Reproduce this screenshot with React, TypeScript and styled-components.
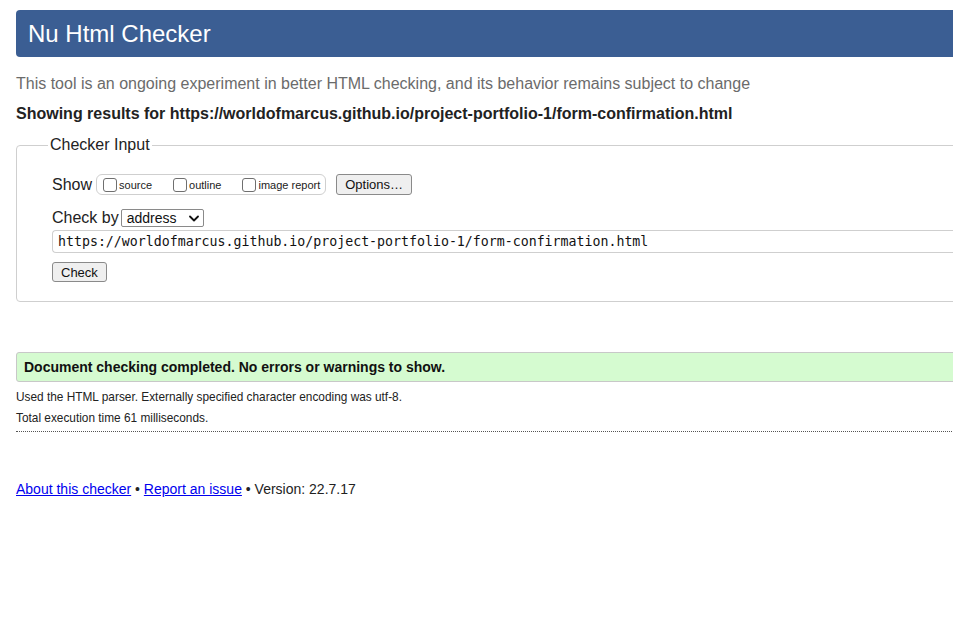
import React from "react";
import styled, { createGlobalStyle } from "styled-components";

const Global = createGlobalStyle`
  html, body { margin: 0; padding: 0; background: #fff; overflow: hidden; }
  body { font-family: "Liberation Sans", Arial, sans-serif; color: #222; }
`;

const Page = styled.div`
  width: 1000px;
  padding: 10px 0 0 16px;
  box-sizing: border-box;
`;

const Header = styled.h1`
  margin: 0;
  height: 47px;
  display: flex;
  align-items: center;
  padding: 0 12px;
  background: #3b5e93;
  color: #fff;
  font-weight: normal;
  font-size: 24px;
  border-radius: 4px;
`;

const Intro = styled.p`
  margin: 18px 0 0;
  font-size: 16px;
  color: #6b6b6b;
  line-height: 18px;
`;

const Showing = styled.p`
  margin: 12px 0 0;
  font-size: 16px;
  font-weight: bold;
  color: #222;
  line-height: 18px;
`;

const Fieldset = styled.fieldset`
  margin: 13px 0 0;
  padding: 10px 0 19px 35px;
  border: 1px solid #cfcfcf;
  border-radius: 4px;
  min-width: 0;
`;

const Legend = styled.legend`
  margin-left: -4px;
  padding: 0 2px;
  font-size: 16px;
  line-height: 18px;
  color: #222;
`;

const Row = styled.div<{ $mt?: number }>`
  display: flex;
  align-items: center;
  font-size: 16px;
  line-height: 18px;
  margin-top: ${(p) => p.$mt ?? 0}px;
`;

const Label = styled.span<{ $mr?: number }>`
  margin-right: ${(p) => p.$mr ?? 4}px;
`;

const Group = styled.div`
  display: flex;
  align-items: center;
  height: 19px;
  padding: 0 5px 0 6px;
  border: 1px solid #cfcfcf;
  border-radius: 6px;
`;

const CheckLabel = styled.label<{ $mr?: number }>`
  display: flex;
  align-items: center;
  font-size: 11px;
  color: #222;
  margin-right: ${(p) => p.$mr ?? 0}px;
`;

const Box = styled.span`
  display: inline-block;
  width: 14px;
  height: 14px;
  border: 1px solid #6f6f6f;
  border-radius: 3px;
  margin-right: 2px;
  box-sizing: border-box;
`;

const Button = styled.button<{ $h?: number; $ml?: number }>`
  font-family: "Liberation Sans", Arial, sans-serif;
  font-size: 13px;
  color: #111;
  background: #efefef;
  border: 1px solid #8a8a8a;
  border-radius: 3px;
  padding: 0 8px;
  height: ${(p) => p.$h ?? 20}px;
  margin-left: ${(p) => p.$ml ?? 0}px;
  line-height: 1;
`;

const Select = styled.div`
  display: flex;
  align-items: center;
  justify-content: space-between;
  width: 83px;
  height: 18px;
  box-sizing: border-box;
  border: 1px solid #8a8a8a;
  border-radius: 2px;
  padding: 0 4px 0 5px;
  font-size: 14px;
  color: #111;
`;

const UrlInput = styled.div`
  margin-top: 3px;
  height: 23px;
  box-sizing: border-box;
  border: 1px solid #cfcfcf;
  border-right: none;
  border-radius: 4px 0 0 4px;
  padding: 0 5px;
  display: flex;
  align-items: center;
  font-family: "DejaVu Sans Mono", Menlo, monospace;
  font-size: 13.25px;
  color: #111;
`;

const Result = styled.div`
  margin-top: 50px;
  height: 30px;
  box-sizing: border-box;
  background: #d5fbd0;
  border: 1px solid #c8c8c8;
  border-radius: 3px;
  display: flex;
  align-items: center;
  padding-left: 7px;
  font-size: 14px;
  font-weight: bold;
  color: #111;
`;

const Small = styled.p<{ $mt?: number }>`
  margin: ${(p) => p.$mt ?? 0}px 0 0;
  font-size: 11.85px;
  line-height: 14px;
  color: #222;
`;

const Rule = styled.hr`
  margin: 6px 0 0;
  border: none;
  border-top: 1px dotted #555;
  height: 0;
`;

const Footer = styled.p`
  margin: 49px 0 0;
  font-size: 14px;
  line-height: 17px;
  color: #222;
  a { color: #0000ee; text-decoration: underline; }
`;

const Chevron = () => (
  <svg width="10" height="7" viewBox="0 0 10 7">
    <path d="M1 1.5 L5 5.5 L9 1.5" fill="none" stroke="#111" strokeWidth="1.8" strokeLinecap="round" strokeLinejoin="round" />
  </svg>
);

export default function App() {
  return (
    <Page>
      <Global />
      <Header>Nu Html Checker</Header>
      <Intro>This tool is an ongoing experiment in better HTML checking, and its behavior remains subject to change</Intro>
      <Showing>Showing results for https://worldofmarcus.github.io/project-portfolio-1/form-confirmation.html</Showing>
      <Fieldset>
        <Legend>Checker Input</Legend>
        <Row $mt={10}>
          <Label>Show</Label>
          <Group>
            <CheckLabel $mr={21}><Box />source</CheckLabel>
            <CheckLabel $mr={21}><Box />outline</CheckLabel>
            <CheckLabel><Box />image report</CheckLabel>
          </Group>
          <Button $ml={10} $h={21}>Options…</Button>
        </Row>
        <Row $mt={14}>
          <Label $mr={2}>Check by</Label>
          <Select>address<Chevron /></Select>
        </Row>
        <UrlInput>https://worldofmarcus.github.io/project-portfolio-1/form-confirmation.html</UrlInput>
        <Row $mt={9}>
          <Button $h={20}>Check</Button>
        </Row>
      </Fieldset>
      <Result>Document checking completed. No errors or warnings to show.</Result>
      <Small $mt={8}>Used the HTML parser. Externally specified character encoding was utf-8.</Small>
      <Small $mt={7}>Total execution time 61 milliseconds.</Small>
      <Rule />
      <Footer>
        <a href="#">About this checker</a> • <a href="#">Report an issue</a> • Version: 22.7.17
      </Footer>
    </Page>
  );
}
